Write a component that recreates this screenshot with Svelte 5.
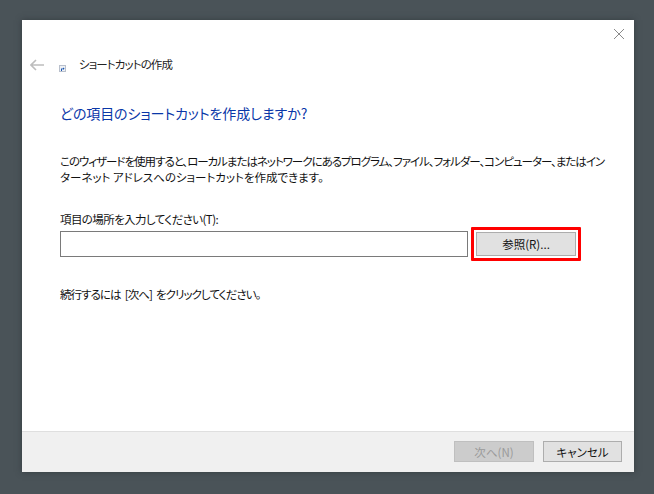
<script>
  const intro = 'このウィザードを使用すると、ローカルまたはネットワークにあるプログラム、ファイル、フォルダー、コンピューター、またはイン';
  const intro2 = 'ターネット アドレスへのショートカットを作成できます。';
</script>

<div class="page">
  <div class="window">
    <div class="close-row">
      <svg class="close" width="10" height="10" viewBox="0 0 10 10" aria-label="閉じる">
        <path d="M0 0L10 10M10 0L0 10" stroke="#8a8a8a" stroke-width="1" fill="none" />
      </svg>
    </div>
    <div class="nav">
      <svg class="back" width="14" height="12" viewBox="0 0 14 12" aria-label="戻る">
        <path d="M6 1L1 6L6 11M1 6H14" stroke="#bdbdbd" stroke-width="1.6" fill="none" />
      </svg>
      <svg class="shortcut" width="7" height="7" viewBox="0 0 7 7">
        <rect x="0" y="0" width="7" height="7" fill="#b9c0cc" />
        <rect x="1" y="1" width="5" height="5" fill="#eef1f5" />
        <path d="M2 6V3.5H4V2.5L5.6 3.6L4 5V4.2H3V6Z" fill="#1c56b0" />
      </svg>
      <span class="nav-title">ショートカットの作成</span>
    </div>
    <div class="content">
      <h1>どの項目のショートカットを作成しますか?</h1>
      <p class="intro"><span class="line1">{intro}</span><br />{intro2}</p>
      <label class="label" for="loc">項目の場所を入力してください(T):</label>
      <div class="field-row">
        <input id="loc" type="text" />
        <div class="highlight">
          <button class="btn browse">参照(R)...</button>
        </div>
      </div>
      <p class="hint">続行するには [次へ] をクリックしてください。</p>
    </div>
    <div class="footer">
      <button class="btn disabled" disabled>次へ(N)</button>
      <button class="btn cancel">キャンセル</button>
    </div>
  </div>
</div>

<style>
  :global(body) {
    margin: 0;
    background: #4a5358;
  }
  .page {
    width: 654px;
    height: 494px;
    box-sizing: border-box;
    padding: 20px 20px 22px 22px;
    background: #4a5358;
    font-family: "Noto Sans CJK JP", "Noto Sans", sans-serif;
    font-size: 12px;
    color: #111;
    font-feature-settings: "palt";
  }
  .window {
    width: 612px;
    height: 452px;
    background: #fff;
    display: flex;
    flex-direction: column;
    box-shadow: 0 0 6px rgba(40, 46, 50, 0.6);
  }
  .close-row {
    display: flex;
    justify-content: flex-end;
    height: 29px;
    padding: 9px 10px 0 0;
    box-sizing: border-box;
  }
  .close { display: block; }
  .nav {
    display: flex;
    align-items: center;
    height: 30px;
    padding-left: 8px;
  }
  .back { margin-top: 1px; }
  .shortcut { margin: 8px 0 0 15px; }
  .nav-title {
    margin-left: 13px;
    font-size: 11.5px;
    line-height: 30px;
    letter-spacing: -0.9px;
    color: #222;
  }
  .content {
    flex: 1;
    padding: 0 0 0 38px;
  }
  h1 {
    margin: 22px 0 0;
    font-size: 14px;
    line-height: 24px;
    font-weight: 400;
    color: #0a37a8;
    letter-spacing: -0.1px;
  }
  .intro {
    margin: 28px 0 0;
    font-size: 11.5px;
    line-height: 16px;
    white-space: nowrap;
  }
  .line1 { letter-spacing: -1.03px; }
  .label {
    display: block;
    margin-top: 26px;
    font-size: 11.5px;
    line-height: 16px;
    letter-spacing: -0.6px;
  }
  .field-row {
    display: flex;
    align-items: center;
    margin-top: 1px;
    height: 32px;
  }
  input {
    width: 408px;
    height: 26px;
    box-sizing: border-box;
    border: 1px solid #7a7a7a;
    background: #fff;
    margin: 0;
    padding: 0;
    outline: none;
  }
  .highlight {
    margin-left: 3px;
    border: 3px solid #f00;
    padding: 2px;
    border-radius: 1px;
    display: flex;
  }
  .btn {
    box-sizing: border-box;
    height: 21px;
    width: 79px;
    margin: 0;
    padding: 0;
    background: #e1e1e1;
    border: 1px solid #adadad;
    font: inherit;
    font-size: 11.5px;
    line-height: 18px;
    color: #111;
  }
  .browse {
    width: 100px;
    height: 24px;
  }
  .hint {
    margin: 26px 0 0;
    font-size: 11.5px;
    line-height: 16px;
    letter-spacing: -0.95px;
    word-spacing: 2.5px;
  }
  .footer {
    height: 41px;
    box-sizing: border-box;
    background: #f0f0f0;
    border-top: 1px solid #dfdfdf;
    display: flex;
    justify-content: flex-end;
    align-items: flex-start;
    gap: 9px;
    padding: 9px 12px 0 0;
  }
  .disabled {
    width: 80px;
    background: #cccccc;
    border-color: #bfbfbf;
    color: #9a9a9a;
  }
</style>
